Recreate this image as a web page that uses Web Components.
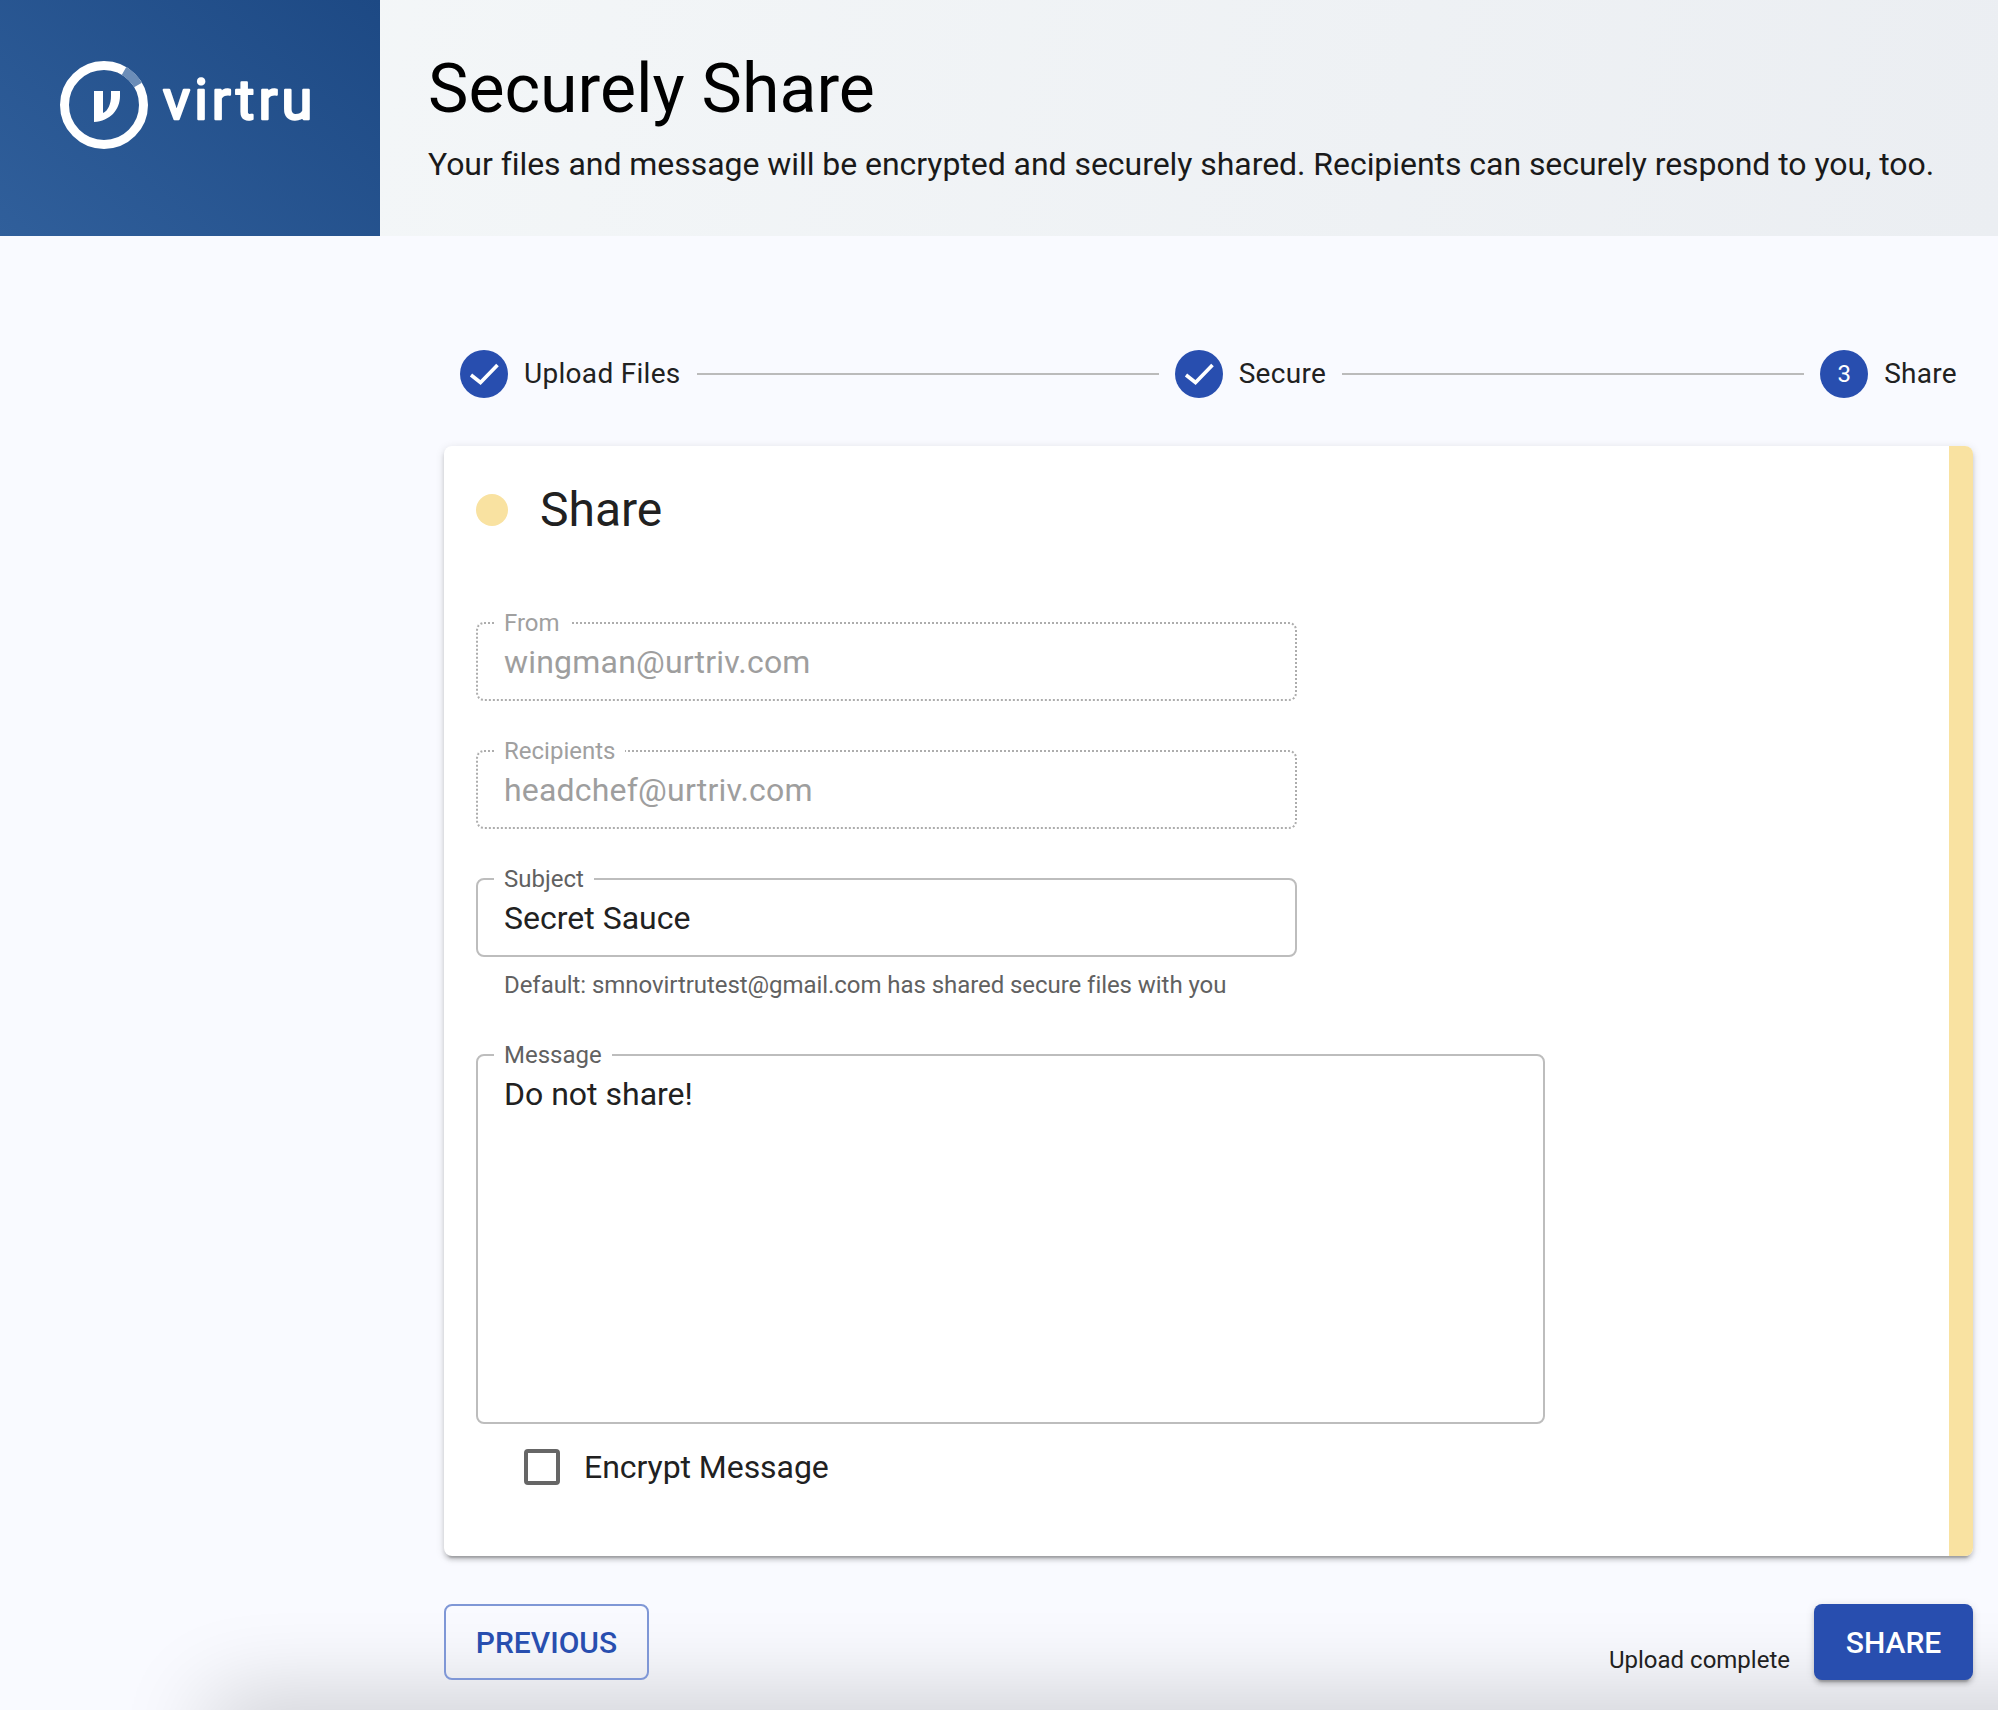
<!DOCTYPE html>
<html lang="en"><head><meta charset="utf-8"><title>Securely Share</title>
<style>
html,body{margin:0;padding:0;height:100%;overflow:hidden;background:#f9faff}
body{font-family:Roboto,"Liberation Sans",sans-serif;color:#212121}
</style></head><body>
<share-page>
  <share-header slot="header" heading="Securely Share" sub="Your files and message will be encrypted and securely shared. Recipients can securely respond to you, too."></share-header>
  <step-bar>
    <step-item state="done">Upload Files</step-item>
    <step-item state="done">Secure</step-item>
    <step-item state="active" num="3">Share</step-item>
  </step-bar>
  <share-card heading="Share">
    <form-field label="From" value="wingman@urtriv.com" disabled></form-field>
    <form-field label="Recipients" value="headchef@urtriv.com" disabled></form-field>
    <form-field label="Subject" value="Secret Sauce" hint="Default: smnovirtrutest@gmail.com has shared secure files with you"></form-field>
    <form-field label="Message" value="Do not share!" multiline></form-field>
    <check-row>Encrypt Message</check-row>
  </share-card>
  <action-bar status="Upload complete"></action-bar>
</share-page>
<script>
function def(name, html, init){
  customElements.define(name, class extends HTMLElement{
    constructor(){super();const r=this.attachShadow({mode:'open'});r.innerHTML=html;}
    connectedCallback(){ if(init) init(this,this.shadowRoot); }
  });
}
def('share-page',`<style>
:host{display:block;position:relative;height:1710px;overflow:hidden}
.glow{position:absolute;left:220px;right:-200px;bottom:-60px;height:60px;box-shadow:0 0 90px 10px rgba(0,0,0,.2)}
main{position:relative;padding:0 25px 0 444px}
</style><div class="glow"></div><slot name="header"></slot><main><slot></slot></main>`);

def('share-header',`<style>
:host{display:flex;height:236px;background:linear-gradient(100deg,#f5f8f9,#ebeef2)}
.logo{width:380px;flex:none;background:linear-gradient(40deg,#305f9b,#1d4984);display:flex;align-items:flex-start}
svg{display:block}
text{font-family:Roboto,sans-serif;font-size:56px;font-weight:400;fill:#fff;stroke:#fff;stroke-width:2.4px;stroke-linejoin:round;letter-spacing:4px}
.txt{padding:49px 0 0 48px;min-width:0}
h1{margin:0;font-size:68px;line-height:80px;font-weight:400;color:#000;white-space:nowrap}
p{margin:15px 0 0;font-size:32px;line-height:40px;color:#1a1a1a;white-space:nowrap;letter-spacing:-.05px}
</style>
<div class="logo"><svg width="380" height="236" viewBox="0 0 380 236">
<circle cx="104" cy="105" r="39.5" fill="none" stroke="#fff" stroke-width="9"/>
<path d="M124 71 A39.5 39.5 0 0 1 138 85" fill="none" stroke="#6b8db8" stroke-width="9"/>
<path d="M94 91h9v22c5-2 8-9 8-17v-5h9v5c0 14-10 25-26 26z" fill="#fff"/>
<text x="163" y="119">virtru</text>
</svg></div>
<div class="txt"><h1></h1><p></p></div>`,(h,r)=>{r.querySelector('h1').textContent=h.getAttribute('heading');r.querySelector('p').textContent=h.getAttribute('sub');});

def('step-bar',`<style>
:host{display:flex;align-items:center;padding:114px 16px 48px}
</style><slot></slot>`);

def('step-item',`<style>
:host{display:flex;align-items:center;flex:1 1 auto;font-size:28px;line-height:48px;color:#212121;letter-spacing:.3px;white-space:nowrap}
:host(:last-child){flex:none}
:host(:last-child) .line{display:none}
.c{width:48px;height:48px;border-radius:50%;background:#284eaf;color:#fff;display:flex;align-items:center;justify-content:center;font-size:24px;flex:none;margin-right:16px;letter-spacing:0}
.line{flex:1;height:2px;background:#bbb;margin:0 16px}
</style><span class="c"></span><slot></slot><span class="line"></span>`,(h,r)=>{
  const c=r.querySelector('.c');
  if(h.getAttribute('state')==='done'){c.innerHTML='<svg width="48" height="48" viewBox="0 0 48 48"><path d="M11 25l9.500 7.500L37.500 15" fill="none" stroke="#fff" stroke-width="3.600"/></svg>';}
  else c.textContent=h.getAttribute('num');
});

def('share-card',`<style>
:host{display:flex;height:1110px;background:#fff;border-radius:8px;overflow:hidden;box-shadow:0 6px 2px -4px rgba(0,0,0,.2),0 4px 4px rgba(0,0,0,.14),0 2px 10px rgba(0,0,0,.12)}
.body{flex:1;padding:32px 32px 0}
.bar{width:24px;background:#f9e2a1;flex:none}
.head{display:flex;align-items:center;height:64px;margin-bottom:67px}
.dot{width:32px;height:32px;border-radius:50%;background:#f9e2a1;margin-right:32px}
h2{margin:0;font-size:48px;line-height:64px;font-weight:400;color:#212121}
</style><div class="body"><div class="head"><span class="dot"></span><h2></h2></div><slot></slot></div><div class="bar"></div>`,(h,r)=>{r.querySelector('h2').textContent=h.getAttribute('heading');});

def('form-field',`<style>
:host{display:block;width:821px;margin-bottom:36px}
:host([multiline]){width:1069px;margin-bottom:0}
fieldset{margin:0;padding:0 26px;min-width:0;height:92px;box-sizing:border-box;border:2px solid #bdbdbd;border-radius:8px}
:host([multiline]) fieldset{height:383px}
:host([disabled]) fieldset{border:2px dotted #adadad}
legend{margin-left:-10px;padding:0 10px;font-size:24px;line-height:28px;color:#616161}
:host([disabled]) legend{color:#a0a0a0}
.v{font-size:32px;line-height:40px;margin-top:5px;color:#212121}
:host([multiline]) .v{margin-top:5px}
:host([disabled]) .v{color:#9e9e9e;letter-spacing:.2px}
.hint{font-size:24px;line-height:28px;color:#616161;padding:0 0 0 28px;margin-top:14px;margin-bottom:-28px;letter-spacing:-.06px;white-space:nowrap}
:host([hint]){margin-bottom:70px}
</style><fieldset><legend></legend><div class="v"></div></fieldset><div class="hint"></div>`,(h,r)=>{
  r.querySelector('legend').textContent=h.getAttribute('label');
  r.querySelector('.v').textContent=h.getAttribute('value');
  const t=r.querySelector('.hint'); if(h.hasAttribute('hint')) t.textContent=h.getAttribute('hint'); else t.remove();
});

def('check-row',`<style>
:host{display:flex;align-items:center;padding:23px 0 0 48px;font-size:32px;line-height:40px;color:#212121;letter-spacing:-.05px}
.box{width:36px;height:36px;box-sizing:border-box;border:4px solid #666;border-radius:4px;margin-right:24px;flex:none}
</style><span class="box"></span><slot></slot>`);

def('action-bar',`<style>
:host{display:flex;justify-content:space-between;align-items:flex-end;margin-top:48px;font-size:30px}
button{font:inherit;font-family:Roboto,sans-serif;font-weight:500;border-radius:8px;height:76px;padding:0;cursor:pointer}
.prev{width:205px;background:transparent;border:2px solid #7f97d6;color:#284eaf}
.go{width:159px;background:#284eaf;border:0;color:#fff;box-shadow:0 6px 2px -4px rgba(0,0,0,.2),0 4px 4px rgba(0,0,0,.14),0 2px 10px rgba(0,0,0,.12)}
.r{display:flex;align-items:flex-end;gap:24px}
.s{font-size:24px;line-height:28px;padding-bottom:6px;color:#212121}
</style><button class="prev">PREVIOUS</button><div class="r"><span class="s"></span><button class="go">SHARE</button></div>`,(h,r)=>{r.querySelector('.s').textContent=h.getAttribute('status');});
</script>
</body></html>
